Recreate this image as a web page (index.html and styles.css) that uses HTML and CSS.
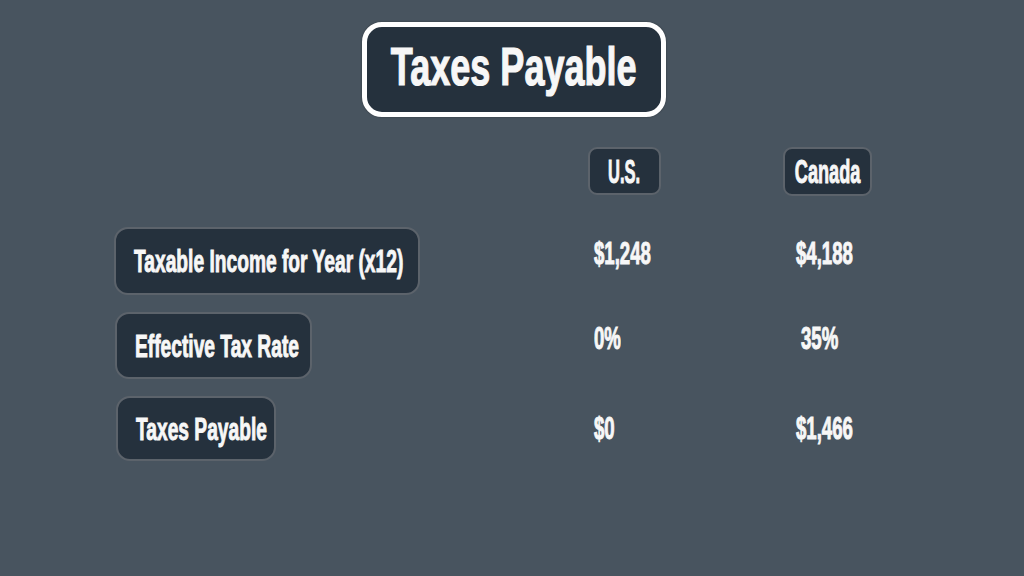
FILE: index.html
```html
<!DOCTYPE html>
<html lang="en">
<head>
<meta charset="utf-8">
<title>Taxes Payable</title>
<link rel="stylesheet" href="styles.css">
</head>
<body>
<main class="slide">
  <header class="title-wrap">
    <h1 class="title"><span class="sq sq-title">Taxes Payable</span></h1>
  </header>
  <section class="table">
    <div class="cell"></div>
    <div class="cell col-us"><div class="head head-us"><span class="sq sq-head sq-us">U.S.</span></div></div>
    <div class="cell col-ca"><div class="head head-ca"><span class="sq sq-head">Canada</span></div></div>

    <div class="cell"><div class="label label-1"><span class="sq sq-label">Taxable Income for Year (x12)</span></div></div>
    <div class="cell col-us value"><span class="sq sq-value">$1,248</span></div>
    <div class="cell col-ca value"><span class="sq sq-value">$4,188</span></div>

    <div class="cell"><div class="label label-2"><span class="sq sq-label">Effective Tax Rate</span></div></div>
    <div class="cell col-us value"><span class="sq sq-value">0%</span></div>
    <div class="cell col-ca value value-shift"><span class="sq sq-value">35%</span></div>

    <div class="cell"><div class="label label-3"><span class="sq sq-label">Taxes Payable</span></div></div>
    <div class="cell col-us value value-low"><span class="sq sq-value">$0</span></div>
    <div class="cell col-ca value value-low"><span class="sq sq-value">$1,466</span></div>
  </section>
</main>
</body>
</html>
```

FILE: styles.css
```css
html, body {
  margin: 0;
  padding: 0;
}
body {
  width: 1024px;
  height: 576px;
  overflow: hidden;
  background: #48545f;
  color: #f7f7f7;
  font-family: "Liberation Sans", Arial, sans-serif;
  font-weight: 700;
}
.slide {
  display: flex;
  flex-direction: column;
}
.title-wrap {
  display: flex;
  justify-content: center;
  padding-top: 22px;
  padding-left: 4px;
}
.title {
  margin: 0;
  box-sizing: border-box;
  width: 304px;
  height: 95px;
  border: 5px solid #ffffff;
  border-radius: 20px;
  background: #25313d;
  display: flex;
  align-items: center;
  justify-content: center;
  padding-bottom: 6px;
  font-size: 53px;
  font-weight: 700;
  line-height: 1;
  box-shadow: 0 0 2px rgba(0,0,0,0.4);
}
.sq {
  display: inline-block;
  white-space: nowrap;
  line-height: 1;
  -webkit-text-stroke: 1px currentColor;
}
.sq-title {
  transform: scaleX(0.68);
  transform-origin: center center;
  -webkit-text-stroke: 1.2px currentColor;
}
.table {
  display: grid;
  grid-template-columns: 474px 195px 1fr;
  grid-auto-rows: auto;
  row-gap: 17px;
  padding-left: 114px;
  margin-top: 30px;
}
.cell {
  display: flex;
}
.head {
  box-sizing: border-box;
  height: 48px;
  border: 2px solid #5c636b;
  border-radius: 9px;
  background: #25313d;
  display: flex;
  align-items: center;
  justify-content: center;
  font-size: 33px;
  margin-bottom: 14px;
}
.head-us { width: 73px; }
.head-ca { width: 89px; height: 49px; }
.sq-head {
  transform: scaleX(0.55);
  transform-origin: center center;
}
.sq-head.sq-us {
  transform: scaleX(0.5);
}
.label {
  box-sizing: border-box;
  border: 2px solid #5c636b;
  border-radius: 14px;
  background: #25313d;
  display: flex;
  align-items: center;
  padding-left: 18px;
  font-size: 32px;
}
.label-1 { width: 306px; height: 68px; }
.label-2 { width: 197px; height: 67px; margin-left: 1px; }
.label-3 { width: 160px; height: 65px; margin-left: 2px; }
.sq-label {
  transform: scaleX(0.6);
  transform-origin: left center;
}
.value {
  align-items: flex-start;
  font-size: 31px;
  padding-top: 11px;
}
.col-us.value { padding-left: 6px; }
.col-ca.value { padding-left: 13px; }
.col-ca.value-shift { padding-left: 18px; }
.value-low { padding-top: 17px; }
.sq-value {
  transform: scaleX(0.6);
  transform-origin: left center;
}
```
